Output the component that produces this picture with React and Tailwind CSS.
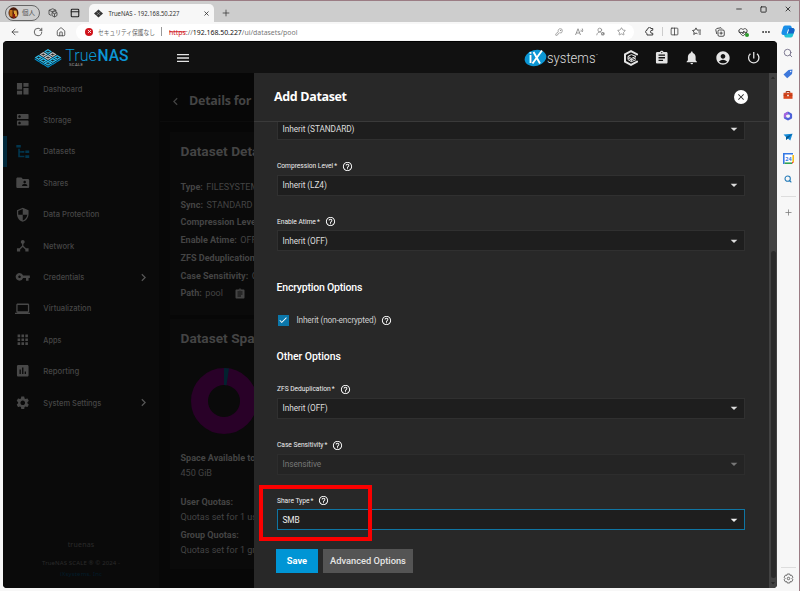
import {
  MdDashboard, MdDns, MdFolderShared, MdSecurity, MdDeviceHub, MdVpnKey, MdLaptop, MdApps,
  MdInsertChart, MdSettings, MdAssignment, MdNotifications, MdAccountCircle, MdPowerSettingsNew,
  MdMenu, MdHelpOutline, MdArrowDropDown, MdChevronRight, MdChevronLeft, MdCheck, MdClose,
} from 'react-icons/md'
import {
  ArrowLeft, RotateCw, House, KeyRound, UserRoundCog, Star, Columns2,
  HeartPulse, Ellipsis, Minus, Square, X, Plus, Search, PanelTop,
} from 'lucide-react'

const navItems = [
  { label: 'Dashboard', icon: MdDashboard, width: 39 },
  { label: 'Storage', icon: MdDns, width: 28 },
  { label: 'Datasets', icon: TreeIcon, width: 32, active: true },
  { label: 'Shares', icon: MdFolderShared, width: 25 },
  { label: 'Data Protection', icon: MdSecurity, width: 56 },
  { label: 'Network', icon: MdDeviceHub, width: 31 },
  { label: 'Credentials', icon: MdVpnKey, width: 41, more: true },
  { label: 'Virtualization', icon: MdLaptop, width: 48 },
  { label: 'Apps', icon: MdApps, width: 18 },
  { label: 'Reporting', icon: MdInsertChart, width: 36 },
  { label: 'System Settings', icon: MdSettings, width: 58, more: true },
]

const details = [
  ['Type:', 'FILESYSTEM'],
  ['Sync:', 'STANDARD'],
  ['Compression Level:', 'LZ4'],
  ['Enable Atime:', 'OFF'],
  ['ZFS Deduplication:', 'OFF'],
  ['Case Sensitivity:', 'ON'],
]

function TreeIcon({ size = 14, className }) {
  return (
    <svg width={size} height={size} viewBox="0 0 24 24" fill="currentColor" className={className}>
      <path d="M2 1.500h7v4H2zM9.500 11h5v2.500h-5zM16 10h6v4h-6zM16 17.500h6v4h-6zM5 7.500h2.500V11H9v2.500H7.500V18h7v2.500H5z" />
    </svg>
  )
}

function Tile({ x, y, fill }) {
  return (
    <g transform={`translate(${x} ${y})`}>
      <path d="M0-2.500 3.900 0 0 2.500-3.900 0z" fill={fill} />
      <path d="M-3.900.8 0 3.300v1.200l-3.900-2.500zM3.900.8 0 3.300v1.200l3.900-2.500z" fill="#0095d5" />
      <path d="M-1.800 0h3.600M0-1.200v2.400" stroke="#111" strokeWidth=".7" />
    </g>
  )
}

function TrueNasMark() {
  return (
    <svg width="28" height="20" viewBox="-14 -10 28 20">
      <Tile x={0} y={-6.500} fill="#31beec" />
      <Tile x={-4.700} y={-3.500} fill="#c4c4c4" />
      <Tile x={4.700} y={-3.500} fill="#c4c4c4" />
      <Tile x={-9.400} y={-0.500} fill="#31beec" />
      <Tile x={0} y={-0.500} fill="#c4c4c4" />
      <Tile x={9.400} y={-0.500} fill="#31beec" />
      <Tile x={-4.700} y={2.500} fill="#31beec" />
      <Tile x={4.700} y={2.500} fill="#31beec" />
      <Tile x={0} y={5.300} fill="#31beec" />
    </svg>
  )
}

function TrueCommandIcon() {
  return (
    <svg width="16" height="16" viewBox="0 0 24 24" fill="none" stroke="#e4e4e4">
      <path d="M21 8V6.500L12 1.800 3 6.500v11l9 4.700 9-4.700V16" strokeWidth="3" />
      <path d="m7.500 9.500 5-2.500 7 2.500-7 3.200zM7.500 9.500v5l5 3 7-3M12.500 12.700v4.800M7.500 12l5 2.800 7-3" strokeWidth="1.500" />
    </svg>
  )
}

function WorkspacesIcon() {
  return (
    <svg width="10" height="10" viewBox="0 0 20 20" fill="none" stroke="#444" strokeWidth="1.700" className="mb-1 ml-[8px]">
      <path d="m8 9 5-2.500L18 9v6l-5 3-5-3zM8 9l5 2.500L18 9M13 11.500V18" />
      <path d="M16 7V4.500L9.500 1.500 2 4.500v8L6.500 15M2 4.500l6 2.700 8-2.700" />
    </svg>
  )
}

function PuzzleIcon() {
  return (
    <svg width="9" height="9" viewBox="0 0 18 18" fill="none" stroke="#333" strokeWidth="1.900" className="ml-[11px]">
      <path d="M15.500 6.500V3h-4a2.500 2.500 0 0 0-5 0L4 4.500v2a3 3 0 0 0-1.500 5.500L4 13v3h11.500v-3.500h-1.500a2.800 2.800 0 0 1 0-6z" />
    </svg>
  )
}

function FavoritesIcon() {
  return (
    <svg width="10" height="10" viewBox="0 0 20 20" fill="none" stroke="#333" strokeWidth="1.700" className="ml-[13px]">
      <path d="M11 13.500 8 12l-4.500 3 .8-5L1 7l4.700-.8L8 1.800l2.200 4.400H18M12.500 10H18M13.500 14H18" />
    </svg>
  )
}

function CollectionsIcon() {
  return (
    <svg width="10" height="10" viewBox="0 0 20 20" fill="none" stroke="#333" strokeWidth="1.700" className="ml-[13px]">
      <rect x="6" y="6" width="12.500" height="12.500" rx="2.500" />
      <path d="M3.500 14 1.500 5.500 3.500 3 12 1.500l2 2M12.200 9v6.500M9 12.200h6.500" />
    </svg>
  )
}

function GearIcon() {
  return (
    <svg width="11" height="11" viewBox="0 0 22 22" fill="none" stroke="#555" strokeWidth="1.700" className="mb-[7px] mt-[5.500px]">
      <path d="M8.500 2h5l.8 2.800 2.900-.5 2.500 4.200L17.800 11l1.900 2.500-2.500 4.200-2.900-.5-.8 2.800h-5l-.8-2.800-2.900.5-2.500-4.200L4.200 11 2.300 8.500l2.500-4.200 2.900.5z" strokeLinejoin="round" />
      <circle cx="11" cy="11" r="2.500" />
    </svg>
  )
}

function Browser() {
  return (
    <>
      <div className="flex h-[21px] shrink-0 items-end bg-[#cdcdcd] pl-[5px]">
        <div className="mb-[1px] flex h-4 w-[35px] items-center rounded-full border border-[#666] pl-[2px]">
          <svg width="11" height="12" viewBox="0 0 11 12" className="shrink-0">
            <ellipse cx="5.500" cy="6" rx="5" ry="5.800" fill="#4b1b0a" />
            <path d="M1.500 3h3v7l-3-1z" fill="#c3731b" />
            <path d="M5.500 3.500h3l1 6h-3z" fill="#e2a33a" />
            <path d="M5 7h2v4H5z" fill="#8c1a0e" />
          </svg>
          <span className="ml-[3px] whitespace-nowrap text-[6.500px] text-[#555]">個人</span>
        </div>
        <WorkspacesIcon />
        <PanelTop size={10} strokeWidth={2.600} className="mb-1 ml-[12px] text-[#222]" />
        <div className="ml-[9px] flex h-[18px] w-[125px] items-center rounded-t-[5px] bg-[#f7f7f7] pl-[5px]">
          <svg width="9" height="9" viewBox="0 0 10 10">
            <path d="M5 .5 10 5 5 9.500 0 5z" fill="#333" />
            <path d="m2.500 2.800 5 4.500m0-4.500-5 4.500" stroke="#aaa" strokeWidth=".6" />
          </svg>
          <svg width="95" height="12" viewBox="0 0 95 12" className="ml-[5px]">
            <text x=".5" y="8.500" fontSize="7" fill="#333" textLength="71" lengthAdjust="spacingAndGlyphs">TrueNAS - 192.168.50.227</text>
          </svg>
          <X size={7} strokeWidth={2.600} className="text-[#222]" />
        </div>
        <Plus size={10} strokeWidth={1.800} className="mb-[4px] ml-[7px] text-[#333]" />
        <div className="mb-[9px] ml-auto flex items-center gap-[17px] pr-[7px] text-[#222]">
          <Minus size={8} strokeWidth={2.500} />
          <Square size={7} strokeWidth={3} />
          <X size={8} strokeWidth={2.500} />
        </div>
      </div>
      <div className="flex h-[19px] shrink-0 items-center bg-[#f7f7f7] pl-[10px] pr-[4px] text-[#333]">
        <ArrowLeft size={10} strokeWidth={1.800} />
        <RotateCw size={10} strokeWidth={1.800} className="ml-[13px]" />
        <House size={10} strokeWidth={1.800} className="ml-[13px]" />
        <div className="ml-[10px] flex h-4 w-[558px] items-center rounded-full bg-white pl-[9px] pr-[8px]">
          <span className="flex size-[8px] shrink-0 items-center justify-center rounded-full bg-[#d0131b]">
            <X size={5} strokeWidth={4} className="text-white" />
          </span>
          <svg width="58" height="12" viewBox="0 0 58 12" className="ml-[4.500px] shrink-0">
            <text x="0" y="8.500" fontSize="7" fill="#666" textLength="57" lengthAdjust="spacingAndGlyphs">セキュリティ保護なし</text>
          </svg>
          <span className="ml-[5px] h-[9px] w-px bg-[#999]" />
          <svg width="130" height="12" viewBox="0 0 130 12" className="ml-[7px] shrink-0">
            <text x="0" y="8.500" fontSize="7.600" fill="#777" textLength="128.500" lengthAdjust="spacingAndGlyphs">
              <tspan fill="#d0131b" className="line-through">https</tspan>://<tspan fill="#111">192.168.50.227</tspan>/ui/datasets/pool
            </text>
          </svg>
          <div className="ml-auto flex items-center gap-[12px] text-[#777]">
            <KeyRound size={8} strokeWidth={1.800} />
            <svg width="9" height="9" viewBox="0 0 18 18" fill="none" stroke="currentColor" strokeWidth="1.500">
              <path d="m1 16 5-12.500L11 16M3 12h6M12 5.500a4 4 0 0 1 0 4M14.500 3a7 7 0 0 1 0 7" />
            </svg>
            <UserRoundCog size={9} strokeWidth={1.800} />
            <Star size={9} strokeWidth={1.800} />
          </div>
        </div>
        <PuzzleIcon />
        <span className="ml-[8px] h-[9px] w-px bg-[#ccc]" />
        <Columns2 size={9} strokeWidth={2} className="ml-[7px]" />
        <FavoritesIcon />
        <CollectionsIcon />
        <span className="relative ml-[13px]">
          <HeartPulse size={10} strokeWidth={2} />
          <span className="absolute -right-px bottom-0 size-[4px] rounded-full bg-[#2e9a2e]" />
        </span>
        <Ellipsis size={10} strokeWidth={2.500} className="ml-[13px]" />
        <svg width="14" height="13" viewBox="0 0 14 13" className="ml-auto">
          <path d="M4 .5h5c1.200 0 1.500 1 1.900 2.500H8.500L6 10H2.500C.5 10 .2 8.500.6 7L2 2.500C2.400 1.200 3 .5 4 .5z" fill="#1a8fe8" />
          <path d="M10 12.500H5c-1.200 0-1.500-1-1.900-2.500h2.400L8 3h3.500c2 0 2.300 1.500 1.900 3L12 10.500c-.4 1.300-1 2-2 2z" fill="#22c3d6" />
          <path d="M8 3h3.500c2 0 2.300 1.500 1.900 3l-.8 2.500H6.300z" fill="#1563c9" />
          <path d="M7.500 4.500 6.300 8.500" stroke="#fff" />
        </svg>
      </div>
    </>
  )
}

function EdgeRail() {
  return (
    <aside className="flex w-[22px] shrink-0 flex-col items-center bg-[#f7f7f7]">
      <div className="mt-[7px] flex flex-col items-center gap-[11px]">
        <Search size={10} strokeWidth={2.200} className="text-[#74708a]" />
        <svg width="10" height="10" viewBox="0 0 10 10">
          <path d="M5.500 1 9.500.5 9 5 4.200 9.300.5 5.500z" fill="#3d78db" />
          <circle cx="7.700" cy="2.500" r=".7" fill="#fff" />
        </svg>
        <svg width="10" height="10" viewBox="0 0 10 10">
          <path d="M3.200 3V1.500h3.600V3" fill="none" stroke="#963017" />
          <path d="M.5 2.800h9v6h-9z" fill="#d9481f" />
          <path d="M.5 5.200h9" stroke="#963017" strokeWidth=".6" />
          <path d="M4.200 4.700h1.600v1.600H4.200z" fill="#fff" />
        </svg>
        <svg width="10" height="10" viewBox="0 0 10 10">
          <path d="m5 1.800 3 1.600v3.300L5 8.300 2 6.700V3.400z" fill="none" stroke="#4d62d8" strokeWidth="2.200" strokeLinejoin="round" />
          <path d="M5 1.800 2 3.400v3" fill="none" stroke="#a765dd" strokeWidth="2.200" strokeLinejoin="round" />
        </svg>
        <svg width="10" height="10" viewBox="0 0 10 10">
          <path d="M.5 2.500 9.500 1.700 7.300 8.500 4.800 6.500 3 8V5z" fill="#1389d8" />
          <path d="m3 5 6.500-3.300L4.800 6.500 3 8z" fill="#075991" />
        </svg>
        <svg width="11" height="11" viewBox="0 0 11 11">
          <path d="M0 0h11v11H0z" fill="#fff" />
          <path d="M.8 11V.8H10" fill="none" stroke="#3478e5" strokeWidth="1.600" />
          <path d="M10.200 2v7" stroke="#f6bb16" strokeWidth="1.600" />
          <path d="M1.600 10.200H9" stroke="#33a352" strokeWidth="1.600" />
          <path d="M9 9h2l-2 2z" fill="#e54335" />
          <text x="5.500" y="7.700" fontSize="5.500" fontWeight="700" fill="#3478e5" textAnchor="middle">24</text>
        </svg>
        <Search size={8} strokeWidth={3.200} className="text-[#247bb8]" />
      </div>
      <div className="mt-[12.500px] h-px w-[15px] bg-[#ddd]" />
      <Plus size={9} strokeWidth={2} className="mt-[11.500px] text-[#777]" />
      <div className="mt-auto h-px w-[15px] bg-[#ddd]" />
      <GearIcon />
    </aside>
  )
}

function TopBar() {
  return (
    <header className="flex h-[31px] shrink-0 items-center bg-[#111] pl-[30.500px] text-[#e4e4e4]">
      <TrueNasMark />
      <svg width="66" height="28" viewBox="0 0 66 28" className="ml-[3.500px] font-['Roboto',sans-serif]">
        <text x=".3" y="17.200" fontSize="16.500" fontWeight="300" fill="#0c96d4" textLength="31.500" lengthAdjust="spacingAndGlyphs">True</text>
        <text x="32.500" y="17.200" fontSize="16.500" fontWeight="500" fill="#0c96d4" textLength="31" lengthAdjust="spacingAndGlyphs">NAS</text>
        <text x="4" y="22" fontSize="4.200" fill="#aaa" textLength="14">SCALE</text>
      </svg>
      <MdMenu size={16} className="ml-[43.500px]" />
      <svg width="76" height="22" viewBox="0 0 76 22" className="ml-[333.500px] font-['Roboto',sans-serif]">
        <ellipse cx="11.500" cy="11" rx="11" ry="8" fill="#0c96d4" transform="rotate(-14 11.500 11)" />
        <text x="4.500" y="16" fontSize="14" fontWeight="500" fill="#fff">i</text>
        <path d="m9.500 5 6.500 11.500M18 3.500 8.500 16.500" stroke="#fff" strokeWidth="1.900" />
        <text x="23" y="15.500" fontSize="14.500" fontWeight="300" fill="#ddd" textLength="48.500" lengthAdjust="spacingAndGlyphs">systems</text>
        <text x="72" y="9" fontSize="3" fill="#ddd">™</text>
      </svg>
      <div className="ml-auto flex items-center gap-[15px] pr-[16px]">
        <TrueCommandIcon />
        <MdAssignment size={15.500} />
        <MdNotifications size={15.500} />
        <MdAccountCircle size={16} />
        <MdPowerSettingsNew size={15.500} />
      </div>
    </header>
  )
}

function SideNav() {
  return (
    <nav className="flex w-[157px] shrink-0 flex-col border-r border-[#070707] bg-[#0a0a0a] text-[#444]">
      {navItems.map(({ label, icon: Icon, width, active, more }) => (
        <div key={label} className="flex h-[31.400px] shrink-0 items-center">
          <span className={active ? 'h-full w-[4px] bg-[#02293b]' : 'h-full w-[4px]'} />
          <span className="flex w-[31px] justify-center">
            <Icon size={15.500} className={active ? 'text-[#02364e]' : 'text-[#484848]'} />
          </span>
          <svg width="70" height="14" viewBox="0 0 70 14" className="ml-[5px] font-['Inter',sans-serif]">
            <text x=".3" y="9.800" fontSize="7.700" fontWeight="500" fill="#464646" textLength={width} lengthAdjust="spacingAndGlyphs">{label}</text>
          </svg>
          {more && <MdChevronRight size={15} className="ml-[22.500px] text-[#555]" />}
        </div>
      ))}
      <div className="mt-auto flex flex-col items-center pb-[9px] text-[#2a2a2a]">
        <span className="mb-[8px] text-[7px] leading-[10px] tracking-[0.200px]">truenas</span>
        <svg width="80" height="21" viewBox="0 0 80 21">
          <text x="1" y="7" fontSize="6" fill="#2a2a2a" textLength="78">TrueNAS SCALE ® © 2024 -</text>
          <text x="19" y="17.500" fontSize="6" fill="#021d2b" textLength="42">iXsystems, Inc</text>
        </svg>
      </div>
    </nav>
  )
}

function DatasetDetails() {
  return (
    <main className="flex w-[94px] shrink-0 flex-col overflow-hidden whitespace-nowrap bg-[#070707] font-['Roboto',sans-serif] text-[#444]">
      <div className="flex h-[49px] shrink-0 items-center border-b border-[#0c0c0c] pl-[8px] pt-[8px]">
        <MdChevronLeft size={15} className="shrink-0" />
        <h1 className="ml-[6px] font-['Open_Sans',sans-serif] text-[12.500px] font-bold tracking-[-0.250px]">Details for pool</h1>
      </div>
      <section className="ml-[10px] mt-[10px] h-[183px] w-[200px] shrink-0 bg-[#0a0a0a] pl-[10.500px]">
        <h2 className="pt-[11px] text-[13.700px] font-bold leading-[16px]">Dataset Details</h2>
        <div className="mt-[20px] text-[9.050px] leading-[17.700px]">
          {details.map(([name, value]) => (
            <p key={name}><b>{name}</b><span className="ml-[3.500px]">{value}</span></p>
          ))}
          <p className="flex items-center">
            <b>Path:</b><span className="ml-[3.500px]">pool</span><MdAssignment size={12} className="ml-[11px]" />
          </p>
        </div>
      </section>
      <section className="ml-[10px] mt-[4px] h-[250px] w-[200px] shrink-0 bg-[#0a0a0a] pl-[10.500px]">
        <h2 className="pt-[11px] text-[13.700px] font-bold leading-[16px]">Dataset Space</h2>
        <svg width="66" height="66" viewBox="0 0 66 66" className="ml-[10.500px] mt-[22px]">
          <circle cx="33" cy="33" r="24.500" fill="none" stroke="#290128" strokeWidth="17" />
          <path d="M33 0a33 33 0 0 1 5 .4L35.500 17.200A16 16 0 0 0 33 17z" fill="#02222f" />
        </svg>
        <div className="mt-[16.500px] text-[9.050px] leading-[15px]">
          <p className="font-bold">Space Available to Dataset:</p>
          <p>450 GiB</p>
          <p className="mt-[14px] font-bold">User Quotas:</p>
          <p>Quotas set for 1 user</p>
          <p className="mt-[3px] font-bold">Group Quotas:</p>
          <p>Quotas set for 1 group</p>
        </div>
      </section>
    </main>
  )
}

function SelectBox({ value, focused, disabled }) {
  let style = 'border-[#303030] bg-[#1e1e1e] text-[#ddd]'
  if (focused) style = 'border-[#0f75a3] bg-[#1e1e1e] text-[#eee]'
  if (disabled) style = 'border-[#2d2d2d] bg-[#242424] text-[#777]'
  return (
    <div className={`flex h-[21px] w-[468.800px] items-center justify-between border pl-[5px] pr-[2px] text-[8.300px] tracking-[-0.080px] ${style}`}>
      <span>{value}</span>
      <MdArrowDropDown size={16} />
    </div>
  )
}

function Field({ label, children, ...box }) {
  return (
    <div className="relative mb-[18.300px]">
      <div className="flex h-[16.500px] items-center gap-[5px] pb-[0.500px] pl-[0.500px] text-[6.700px] tracking-[-0.030px] text-[#eee]">
        <span>{label}<span className="ml-px">*</span></span>
        <MdHelpOutline size={11} className="text-white" />
      </div>
      <SelectBox {...box} />
      {children}
    </div>
  )
}

function AddDataset() {
  return (
    <section className="flex w-[515px] shrink-0 flex-col bg-[#282828] font-['Roboto',sans-serif]">
      <div className="flex h-[49px] shrink-0 items-center justify-between border-b border-[#3a3a3a] pl-[20px] pr-[21px]">
        <h2 className="pt-px font-['Open_Sans',sans-serif] text-[12.500px] font-bold tracking-[-0.350px] text-white">Add Dataset</h2>
        <span className="flex size-[14px] items-center justify-center rounded-full bg-white">
          <MdClose size={10} className="text-[#222]" />
        </span>
      </div>
      <div className="flex-1 overflow-hidden pl-[22.500px]">
        <div className="-mt-[3.200px] mb-[18.300px]">
          <SelectBox value="Inherit (STANDARD)" />
        </div>
        <Field label="Compression Level" value="Inherit (LZ4)" />
        <Field label="Enable Atime" value="Inherit (OFF)" />
        <h3 className="pt-[10.700px] text-[10.500px] font-medium leading-[16px] tracking-[-0.200px] text-white">Encryption Options</h3>
        <div className="mt-[16px] flex h-[16px] items-center text-[8.300px] tracking-[-0.180px] text-[#ccc]">
          <span className="ml-px flex size-[11px] items-center justify-center bg-[#0b77aa]">
            <MdCheck size={10} className="text-white" />
          </span>
          <span className="ml-[8px] mr-[5px]">Inherit (non-encrypted)</span>
          <MdHelpOutline size={11} className="text-white" />
        </div>
        <h3 className="mb-[16px] mt-[21px] text-[10.500px] font-medium leading-[16px] tracking-[-0.050px] text-white">Other Options</h3>
        <Field label="ZFS Deduplication" value="Inherit (OFF)" />
        <Field label="Case Sensitivity" value="Insensitive" disabled />
        <Field label="Share Type" value="SMB" focused>
          <div className="absolute -left-[17.500px] -top-[7.500px] h-[56px] w-[112.500px] border-[4px] border-[#fb0000]" />
        </Field>
        <div className="-ml-[0.500px] flex gap-[5px] text-[9.300px] font-medium text-white">
          <button className="h-6 w-[42px] bg-[#0095d5] font-bold">Save</button>
          <button className="h-6 w-[90px] whitespace-nowrap bg-[#545454] text-[#e6e6e6]">Advanced Options</button>
        </div>
      </div>
    </section>
  )
}

function ScrollBar() {
  return (
    <div className="flex w-[8px] shrink-0 flex-col items-center bg-[#424242]">
      <MdArrowDropDown size={10} className="rotate-180 text-[#222]" />
      <div className="mt-[168px] w-[5px] flex-1 rounded-full bg-[#2b2b2b]" />
      <MdArrowDropDown size={10} className="text-[#222]" />
    </div>
  )
}

export default function App() {
  return (
    <div className="flex h-[591px] w-[800px] flex-col overflow-hidden border-r border-t border-[#9b7c84] bg-[#f7f7f7] font-['Noto_Sans','Noto_Sans_CJK_JP',sans-serif]">
      <Browser />
      <div className="flex min-h-0 flex-1 pl-[3px]">
        <div className="mb-[3px] flex w-[774px] shrink-0 flex-col overflow-hidden rounded-[4px] border-t border-black bg-[#111]">
          <TopBar />
          <div className="flex min-h-0 flex-1">
            <SideNav />
            <DatasetDetails />
            <AddDataset />
            <ScrollBar />
          </div>
        </div>
        <EdgeRail />
      </div>
    </div>
  )
}
